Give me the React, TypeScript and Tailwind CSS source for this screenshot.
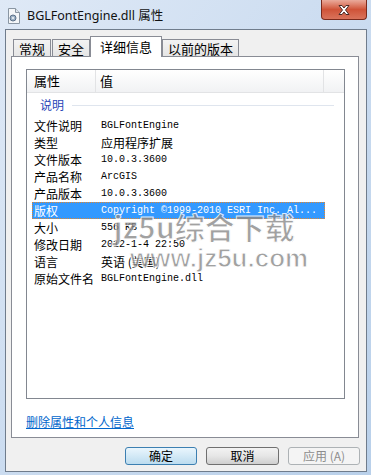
import React from 'react';

type Row = {
  label: string;
  value: string;
  mono?: boolean;
  selected?: boolean;
};

const rows: Row[] = [
  { label: '文件说明', value: 'BGLFontEngine', mono: true },
  { label: '类型', value: '应用程序扩展' },
  { label: '文件版本', value: '10.0.3.3600', mono: true },
  { label: '产品名称', value: 'ArcGIS', mono: true },
  { label: '产品版本', value: '10.0.3.3600', mono: true },
  { label: '版权', value: 'Copyright ©1999-2010 ESRI Inc. Al...', mono: true, selected: true },
  { label: '大小', value: '556 KB', mono: true },
  { label: '修改日期', value: '2012-1-4 22:50', mono: true },
  { label: '语言', value: '英语 (美国)' },
  { label: '原始文件名', value: 'BGLFontEngine.dll', mono: true },
];

const cjk = "font-['Noto_Sans_CJK_SC',sans-serif]";

function FileIcon() {
  return (
    <svg width="14" height="16" viewBox="0 0 14 16">
      <path d="M1.5 0.5h7l4 4v11h-11z" fill="#f4f6f8" stroke="#8a96a3" />
      <path d="M8.5 0.5v4h4" fill="#dde3ea" stroke="#8a96a3" />
      <circle cx="6" cy="10" r="3" fill="#9fb3c6" stroke="#5c7089" />
      <circle cx="6" cy="10" r="1" fill="#f4f6f8" />
    </svg>
  );
}

function Tab({ label, active }: { label: string; active?: boolean }) {
  if (active) {
    return (
      <div className={`${cjk} relative z-10 -mb-px flex h-[21px] items-start border border-b-0 border-[#898c95] bg-white px-[9px] pt-[1px] text-[13px] leading-[17px]`}>
        {label}
      </div>
    );
  }
  return (
    <div className={`${cjk} flex h-[17px] items-center border border-b-0 border-[#898c95] bg-gradient-to-b from-[#f3f3f3] to-[#e5e5e5] px-[5px] text-[13px] leading-[15px]`}>
      {label}
    </div>
  );
}

export default function App() {
  return (
    <div className="relative flex h-[475px] w-[371px] flex-col overflow-hidden bg-gradient-to-br from-[#dfe9f6] via-[#cbdcf0] to-[#b9d0ea] text-black">
      {/* title bar */}
      <div className="flex h-[29px] items-center gap-[6px] pl-[7px] pt-[2px]">
        <FileIcon />
        <span className="font-['Noto_Sans','Noto_Sans_CJK_SC',sans-serif] text-[12.5px] leading-[16px] text-[#111]">
          BGLFontEngine.dll 属性
        </span>
      </div>
      <div className="absolute right-[4px] top-0 flex h-[20px] w-[46px] items-center justify-center rounded-b-[4px] border border-t-0 border-[#7a2a1c] bg-gradient-to-b from-[#e9aa9b] via-[#cf5338] to-[#d9735b]">
        <svg width="16" height="12" viewBox="0 0 16 12">
          <path d="M3 1.5h3l2 2.5 2-2.5h3l-3.5 4.5 3.5 4.5h-3l-2-2.5-2 2.5h-3l3.5-4.5z" fill="#fff" stroke="#4b2b27" strokeWidth="1" strokeLinejoin="round" />
        </svg>
      </div>

      {/* client area */}
      <div className="ml-[5px] flex h-[443px] w-[362px] flex-col border border-[#6f7c8c] bg-[#f0f0f0]">
        <div className="flex h-[26px] items-end pl-[7px]">
          <Tab label="常规" />
          <div className="ml-px">
            <Tab label="安全" />
          </div>
          <Tab label="详细信息" active />
          <Tab label="以前的版本" />
        </div>

        <div className="ml-[5px] flex h-[382px] w-[348px] flex-col border border-[#898c95] bg-white">
          {/* list view */}
          <div className="ml-[14px] mt-[12px] flex h-[330px] w-[319px] flex-col border border-[#828790]">
            <div className={`${cjk} flex h-[23px] items-center border-b border-[#e2e3e5] bg-gradient-to-b from-white to-[#f1f2f4] text-[13px]`}>
              <div className="flex h-full w-[69px] items-center border-r border-[#e2e3e5] pl-[7px]">属性</div>
              <div className="flex h-full w-[228px] items-center border-r border-[#e2e3e5] pl-[4px]">值</div>
            </div>
            <div className="flex h-[24px] items-center pl-[13px] pr-[10px]">
              <span className={`${cjk} text-[12px] leading-[14px] text-[#2846b8]`}>说明</span>
              <div className="ml-[8px] h-px flex-1 bg-[#dfe5ee]" />
            </div>
            <div className="flex flex-col">
              {rows.map(r => (
                <div
                  key={r.label}
                  className={`ml-[5px] flex h-[17px] w-[293px] items-center ${r.selected ? 'border border-dotted border-[#e2862e] bg-[#3399ff] text-white' : 'border border-transparent'}`}
                >
                  <div className={`${cjk} w-[68px] pl-[1px] text-[12px] leading-[15px]`}>{r.label}</div>
                  <div
                    className={
                      r.mono
                        ? "whitespace-nowrap font-['Liberation_Mono',monospace] text-[10px] leading-[15px]"
                        : `${cjk} whitespace-nowrap text-[12px] leading-[15px]`
                    }
                  >
                    {r.value}
                  </div>
                </div>
              ))}
            </div>
          </div>
          <div className="ml-[14px] mt-[10px]">
            <span className={`${cjk} text-[12px] leading-[14px] text-[#0066cc] underline`}>删除属性和个人信息</span>
          </div>
        </div>

        {/* buttons */}
        <div className={`${cjk} mt-[9px] flex justify-end gap-[8px] pr-[6px] text-[12px]`}>
          <div className="flex h-[18px] w-[72px] items-center justify-center rounded-[3px] border border-[#3c7fb1] bg-gradient-to-b from-[#eaf6fd] to-[#bcdcef]">确定</div>
          <div className="ml-px flex h-[18px] w-[73px] items-center justify-center rounded-[3px] border border-[#707070] bg-gradient-to-b from-[#f3f3f3] via-[#e6e6e6] to-[#cfcfcf]">取消</div>
          <div className="ml-[1px] flex h-[18px] w-[72px] items-center justify-center rounded-[3px] border border-[#adb2b5] bg-[#f4f4f4] text-[#8d8d8d]">应用 (A)</div>
        </div>
      </div>

      {/* watermark */}
      <div className="pointer-events-none absolute left-[100px] top-[208px] flex flex-col items-center opacity-80">
        <span className={`${cjk} text-[30px] font-bold leading-[36px] text-[#8a8a8a] [-webkit-text-stroke:1px_#ffffff]`}>jz5u综合下载</span>
        <span className="ml-[30px] font-['Liberation_Sans',sans-serif] text-[26px] font-bold leading-[28px] text-[#8a8a8a] [-webkit-text-stroke:1px_#ffffff]">www.jz5u.com</span>
      </div>
    </div>
  );
}
